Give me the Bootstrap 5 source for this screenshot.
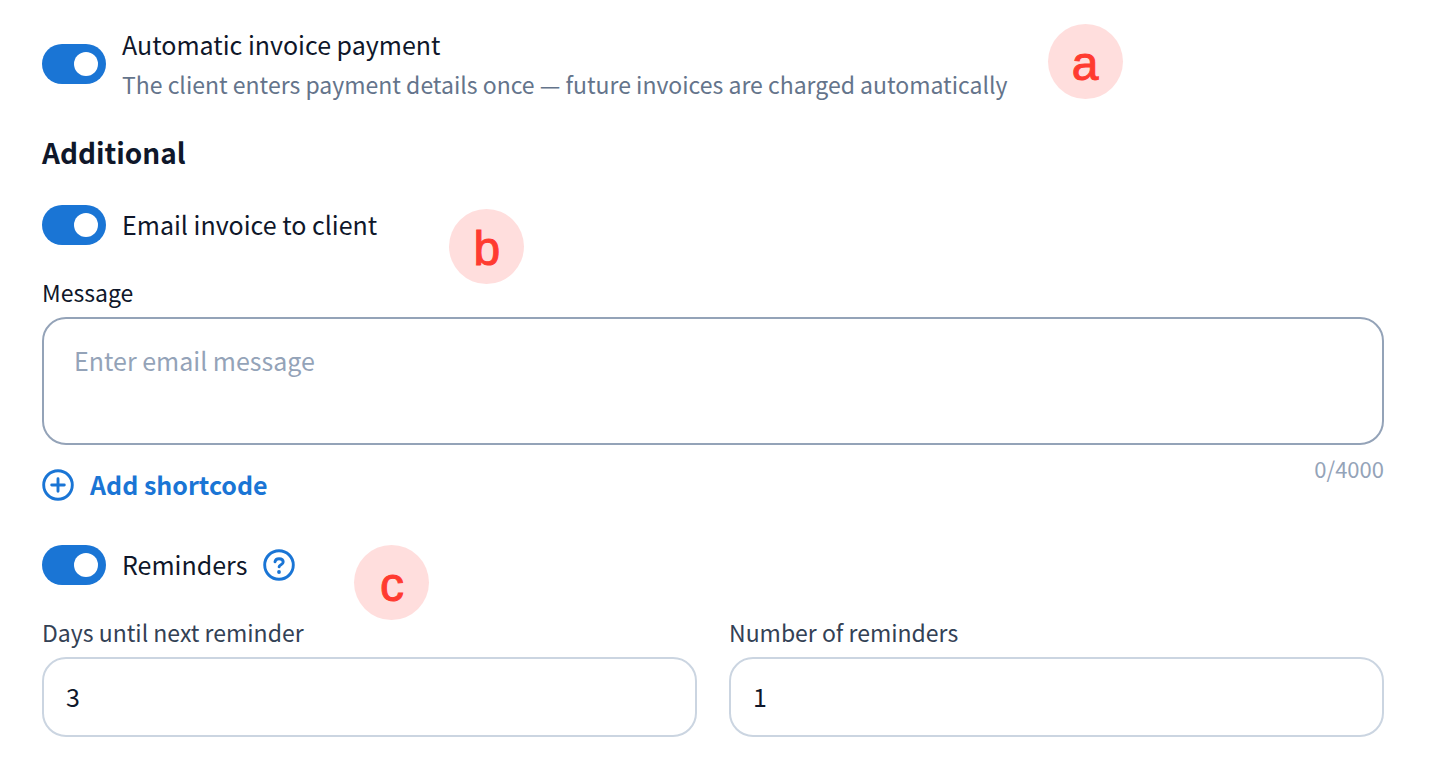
<!DOCTYPE html>
<html lang="en">
<head>
<meta charset="utf-8">
<meta name="viewport" content="width=device-width, initial-scale=1">
<title>Invoice settings</title>
<link href="https://cdn.jsdelivr.net/npm/bootstrap@5.3.0/dist/css/bootstrap.min.css" rel="stylesheet">
<style>
  :root { --ink: #0f172a; --accent: #1a75d5; }
  body { font-family: "Noto Sans CJK SC", "Open Sans", sans-serif; color: var(--ink); background: #fff; }
  .invoice-form { padding: 24px 52px 32px 42px; }
  .text-title { font-size: 25px; line-height: 40px; }
  .text-label { font-size: 23px; line-height: 32px; }
  .text-heading { font-size: 28px; line-height: 40px; font-weight: 700; }
  .text-desc { color: #64748b; line-height: 40px; }
  .text-slate { color: #334155; }

  .switch-line { margin-top: 33px; }
  .switch-line .text-title { line-height: 38px; }
  .field-label { margin: 31px 0 9px; }

  .form-check-input.toggle {
    width: 64px; height: 40px; margin: 0; border: 0; float: none; flex: none;
    background-color: #94a3b8; background-position: left center; background-size: contain;
    background-repeat: no-repeat; border-radius: 20px; cursor: pointer;
    background-image: url("data:image/svg+xml,%3csvg xmlns='http://www.w3.org/2000/svg' viewBox='-4 -4 8 8'%3e%3ccircle r='2.4' fill='%23fff'/%3e%3c/svg%3e");
  }
  .form-check-input.toggle:checked {
    background-color: var(--accent); background-position: right center;
    background-image: url("data:image/svg+xml,%3csvg xmlns='http://www.w3.org/2000/svg' viewBox='-4 -4 8 8'%3e%3ccircle r='2.4' fill='%23fff'/%3e%3c/svg%3e");
  }

  .form-control.field {
    border: 2px solid #cbd5e1; border-radius: 24px; color: var(--ink);
    font-size: 25px; line-height: 40px; padding: 17px 22px 19px; height: 80px;
  }
  .form-control.message {
    border-color: #94a3b8; padding: 21px 30px; height: 128px; resize: none;
  }
  .form-control.message::placeholder { color: #94a3b8; }
  .message-footer { padding-top: 7px; }
  .counter { color: #94a3b8; font-size: 22px; line-height: 32px; }
  .btn-plain { border: 0; padding: 0; background: none; color: var(--accent); }
  .btn-add { font-weight: 700; gap: 16px; }
  .icon-round { margin-top: 2px; }

  .marker {
    left: 100%; top: 50%; width: 75px; height: 75px; border-radius: 50%;
    background: #ffdedd; color: #ff3b30; -webkit-text-stroke: 1px #ff3b30;
    font: 48px/79px "Liberation Sans", Arial, sans-serif; text-align: center;
  }
  .marker-a { margin: -40px 0 0 40px; }
  .marker-b { margin: -15px 0 0 72px; }
  .marker-c { margin: -19px 0 0 59px; }
</style>
</head>
<body>
<main>
<form class="invoice-form">
  <div class="d-flex align-items-center gap-3">
    <input class="form-check-input toggle" type="checkbox" role="switch" id="autoPay" aria-describedby="autoPayHelp" checked>
    <div class="position-relative">
      <label class="text-title d-block" for="autoPay">Automatic invoice payment</label>
      <div class="text-label text-desc" id="autoPayHelp">The client enters payment details once — future invoices are charged automatically</div>
      <span class="marker marker-a position-absolute">a</span>
    </div>
  </div>

  <h2 class="text-heading mt-4 mb-0 pt-1">Additional</h2>

  <div class="switch-line d-flex align-items-start gap-3">
    <input class="form-check-input toggle" type="checkbox" role="switch" id="emailInvoice" checked>
    <div class="position-relative">
      <label class="text-title d-block" for="emailInvoice">Email invoice to client</label>
      <span class="marker marker-b position-absolute">b</span>
    </div>
  </div>

  <label class="text-label field-label d-block" for="message">Message</label>
  <textarea class="form-control field message d-block" id="message" maxlength="4000" placeholder="Enter email message"></textarea>
  <div class="message-footer d-flex justify-content-between align-items-start">
    <button type="button" class="btn-plain btn-add text-title d-flex align-items-center mt-2 pt-1">
      <svg class="icon-round" width="32" height="32" viewBox="0 0 32 32" fill="none" stroke="currentColor" stroke-width="2.9" stroke-linecap="round" aria-hidden="true">
        <circle cx="16" cy="16" r="14.3"/><path d="M16 9.7v12.600M9.700 16h12.600"/>
      </svg>
      Add shortcode
    </button>
    <span class="counter">0/4000</span>
  </div>

  <div class="switch-line d-flex align-items-start gap-3 pt-2">
    <input class="form-check-input toggle" type="checkbox" role="switch" id="reminders" checked>
    <div class="position-relative d-flex align-items-center gap-3">
      <label class="text-title" for="reminders">Reminders</label>
      <button type="button" class="btn-plain d-flex" aria-label="About reminders">
        <svg class="icon-round" width="32" height="32" viewBox="0 0 32 32" fill="none" stroke="currentColor" stroke-width="2.9" stroke-linecap="round" aria-hidden="true">
          <circle cx="16" cy="16" r="14.3"/><path d="M12 12.8C12.3 10.900 13.900 9.700 16 9.700C18.400 9.700 20.200 11 20.200 13C20.200 15.700 16.300 15.600 16.100 17.800"/><circle cx="16" cy="23" r="1.900" fill="currentColor" stroke="none"/>
        </svg>
      </button>
      <span class="marker marker-c position-absolute">c</span>
    </div>
  </div>

  <div class="row" style="--bs-gutter-x:32px">
    <div class="col-6">
      <label class="text-label field-label text-slate d-block" for="days">Days until next reminder</label>
      <input class="form-control field" type="text" inputmode="numeric" id="days" value="3">
    </div>
    <div class="col-6">
      <label class="text-label field-label text-slate d-block" for="count">Number of reminders</label>
      <input class="form-control field" type="text" inputmode="numeric" id="count" value="1">
    </div>
  </div>
</form>
</main>
<script src="https://cdn.jsdelivr.net/npm/bootstrap@5.3.0/dist/js/bootstrap.bundle.min.js"></script>
</body>
</html>
